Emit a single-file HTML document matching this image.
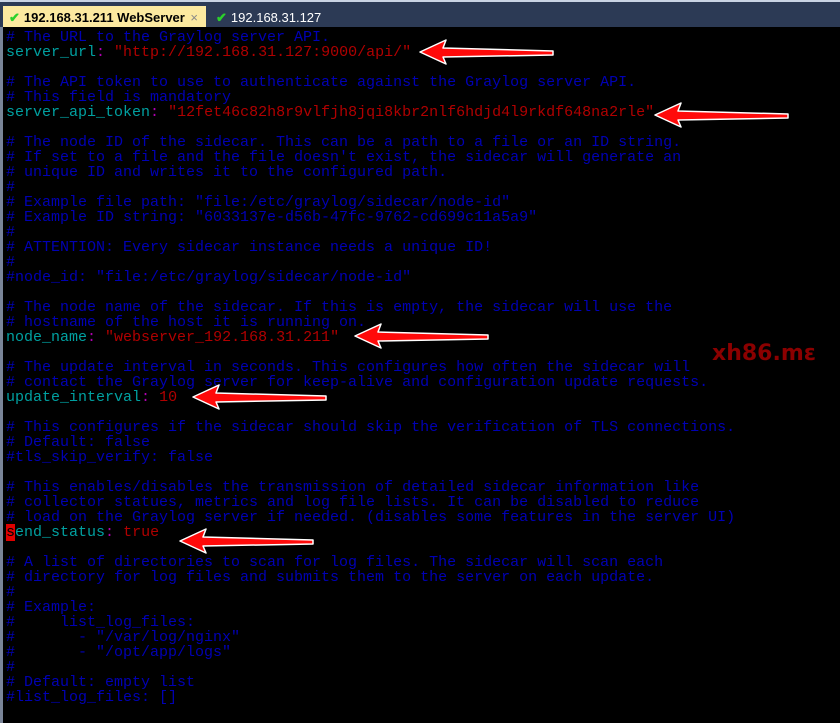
<!DOCTYPE html>
<html><head><meta charset="utf-8"><style>
html,body{margin:0;padding:0;width:840px;height:723px;overflow:hidden;background:#000;}
#tabs{position:absolute;left:0;top:0;width:840px;height:27px;background:#2c3a55;border-top:2px solid #c9d3e3;box-sizing:border-box;}
.tab{position:absolute;top:4px;height:23px;font:13px "Liberation Sans",sans-serif;line-height:23px;}
.t1{left:3px;width:203px;background:#fce9a0;color:#000;font-weight:bold;}
.t2{left:210px;color:#fff;}
.chk{color:#2bd12b;font-weight:bold;margin:0 4px 0 6px;}
#term{position:absolute;left:0;top:27px;width:840px;height:696px;background:#000;border-left:3px solid #7a8598;box-sizing:border-box;}
pre{position:absolute;left:6px;top:30px;margin:0;font:15px "Liberation Mono",monospace;line-height:15px;color:#0000b4;white-space:pre;}
.k{color:#00a0a0}.c{color:#b000b0}.v{color:#b00000}
.cur{background:#e00000;color:#000}
#wm{position:absolute;left:712px;top:341px;font:bold 22px "DejaVu Sans",sans-serif;color:#8b0000;}
svg{position:absolute;left:0;top:0}
</style></head><body>
<div id="tabs"><div class="tab t1"><span class="chk">✔</span>192.168.31.211 WebServer<span style="position:absolute;right:8px;color:#888;font-weight:normal">×</span></div><div class="tab t2"><span class="chk">✔</span>192.168.31.127</div></div>
<div id="term"></div>
<pre># The URL to the Graylog server API.
<span class="k">server_url</span><span class="c">:</span> <span class="v">"http://192.168.31.127:9000/api/"</span>

# The API token to use to authenticate against the Graylog server API.
# This field is mandatory
<span class="k">server_api_token</span><span class="c">:</span> <span class="v">"12fet46c82h8r9vlfjh8jqi8kbr2nlf6hdjd4l9rkdf648na2rle"</span>

# The node ID of the sidecar. This can be a path to a file or an ID string.
# If set to a file and the file doesn't exist, the sidecar will generate an
# unique ID and writes it to the configured path.
#
# Example file path: "file:/etc/graylog/sidecar/node-id"
# Example ID string: "6033137e-d56b-47fc-9762-cd699c11a5a9"
#
# ATTENTION: Every sidecar instance needs a unique ID!
#
#node_id: "file:/etc/graylog/sidecar/node-id"

# The node name of the sidecar. If this is empty, the sidecar will use the
# hostname of the host it is running on.
<span class="k">node_name</span><span class="c">:</span> <span class="v">"webserver_192.168.31.211"</span>

# The update interval in seconds. This configures how often the sidecar will
# contact the Graylog server for keep-alive and configuration update requests.
<span class="k">update_interval</span><span class="c">:</span> <span class="v">10</span>

# This configures if the sidecar should skip the verification of TLS connections.
# Default: false
#tls_skip_verify: false

# This enables/disables the transmission of detailed sidecar information like
# collector statues, metrics and log file lists. It can be disabled to reduce
# load on the Graylog server if needed. (disables some features in the server UI)
<span class="cur">s</span><span class="k">end_status</span><span class="c">:</span> <span class="v">true</span>

# A list of directories to scan for log files. The sidecar will scan each
# directory for log files and submits them to the server on each update.
#
# Example:
#     list_log_files:
#       - "/var/log/nginx"
#       - "/opt/app/logs"
#
# Default: empty list
#list_log_files: []</pre>
<div id="wm">xh86.mɛ</div>
<svg width="840" height="723">
<defs><polygon id="ar" points="0,0 26,-12 23,-4 133,-1 133,3 23,5 26,12" fill="#ff0a0a" stroke="#fff" stroke-width="1.5" stroke-linejoin="round"/></defs>
<use href="#ar" x="420" y="52"/>
<use href="#ar" x="655" y="115"/>
<use href="#ar" x="355" y="336"/>
<use href="#ar" x="193" y="397"/>
<use href="#ar" x="180" y="541"/>
</svg>
</body></html>
